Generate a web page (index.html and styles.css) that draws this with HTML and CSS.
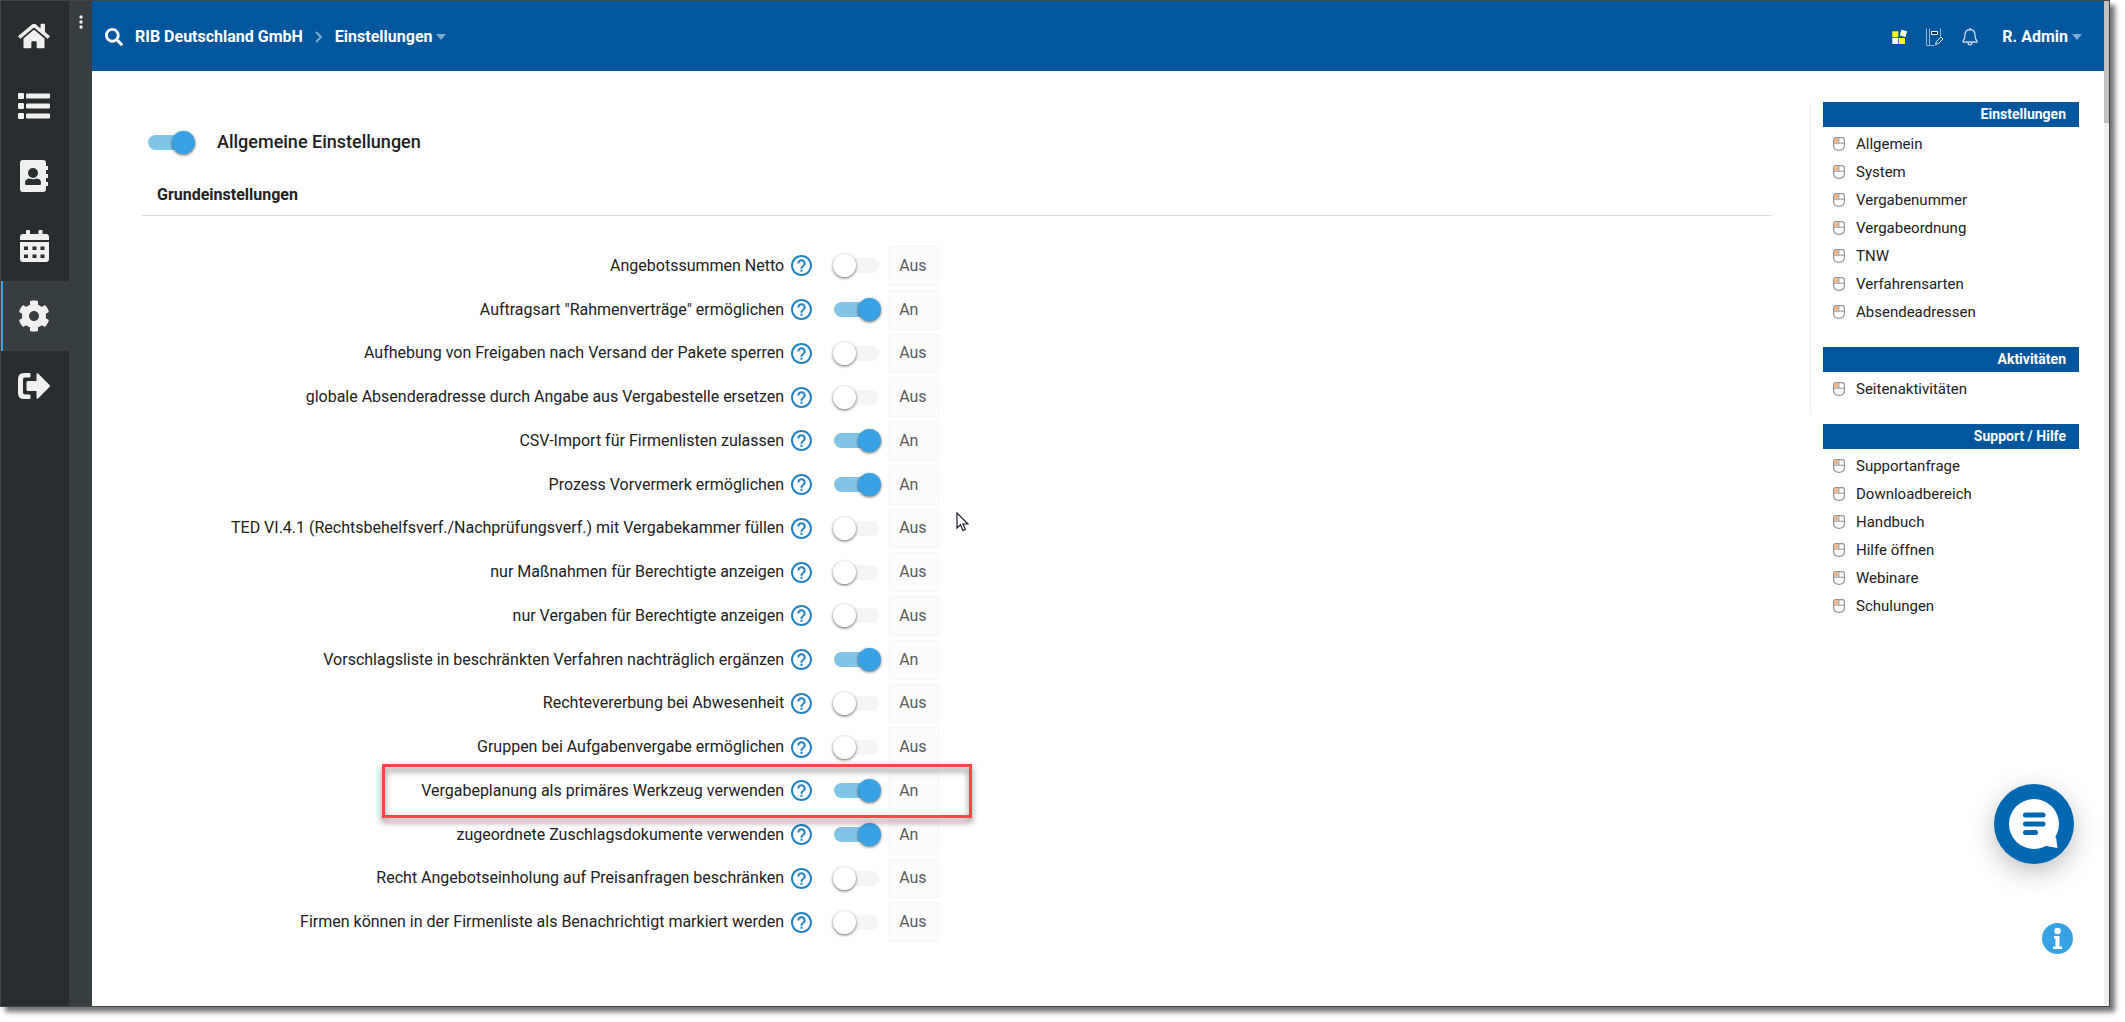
FILE: index.html
```html
<!DOCTYPE html>
<html lang="de">
<head>
<meta charset="utf-8">
<title>Einstellungen</title>
<link rel="stylesheet" href="styles.css">
</head>
<body>
<svg class="sprite" aria-hidden="true">
  <symbol id="help" viewBox="2 2 20 20"><path d="M11 18h2v-2h-2v2zm1-16C6.480 2 2 6.480 2 12s4.480 10 10 10 10-4.480 10-10S17.520 2 12 2zm0 18c-4.410 0-8-3.590-8-8s3.590-8 8-8 8 3.590 8 8-3.590 8-8 8zm0-14c-2.210 0-4 1.790-4 4h2c0-1.100.9-2 2-2s2 .9 2 2c0 2-3 1.750-3 5h2c0-2.250 3-2.500 3-5 0-2.210-1.790-4-4-4z"/></symbol>
  <symbol id="mouse" viewBox="0 0 12 14"><path fill="#fff" stroke="#939393" stroke-width="1.200" d="M3 .7h6Q11.400.7 11.400 3v5.500Q11.400 13.300 6 13.300T.6 8.500V3Q.6.7 3 .7z"/><path fill="#f6b27c" d="M1.200 2.800Q1.300 1.300 3 1.300h2.200v4.200h-4z"/><path stroke="#939393" fill="none" d="M.6 6.200h10.800M5.900 1v5"/></symbol>
</svg>
<div class="frame">
  <nav class="rail" aria-label="Hauptmenü">
    <a class="rail-link" href="#" aria-label="Start"><svg width="32" height="28" viewBox="0 0 576 512"><path d="M280.370 148.260L96 300.110V464a16 16 0 0 0 16 16l112.060-.29a16 16 0 0 0 15.920-16V368a16 16 0 0 1 16-16h64a16 16 0 0 1 16 16v95.640a16 16 0 0 0 16 16.050L464 480a16 16 0 0 0 16-16V300L295.670 148.260a12.190 12.190 0 0 0-15.300 0zM571.600 251.470L488 182.560V44.050a12 12 0 0 0-12-12h-56a12 12 0 0 0-12 12v72.610L318.470 43a48 48 0 0 0-61 0L4.340 251.470a12 12 0 0 0-1.600 16.900l25.500 31A12 12 0 0 0 45.150 301l235.220-193.740a12.190 12.190 0 0 1 15.300 0L530.900 301a12 12 0 0 0 16.900-1.600l25.500-31a12 12 0 0 0-1.700-16.930z"/></svg></a>
    <a class="rail-link" href="#" aria-label="Listen"><svg width="32" height="28" viewBox="0 0 32 28"><rect y="1" width="6" height="6" rx="1"/><rect x="8" y="1.500" width="24" height="5" rx="1"/><rect y="11" width="6" height="6" rx="1"/><rect x="8" y="11.500" width="24" height="5" rx="1"/><rect y="21" width="6" height="6" rx="1"/><rect x="8" y="21.500" width="24" height="5" rx="1"/></svg></a>
    <a class="rail-link" href="#" aria-label="Kontakte"><svg width="28" height="32" viewBox="0 0 28 32"><path fill-rule="evenodd" d="M3 0h20q3 0 3 3v3h2q.8 0 .8.800v2.400q0 .8-.8.800h-2v4h2q.8 0 .8.800v2.400q0 .8-.8.800h-2v4h2q.8 0 .8.800v2.400q0 .8-.8.800h-2v3q0 3-3 3H3q-3 0-3-3V3q0-3 3-3zM13 8a5 5 0 1 0 0 10a5 5 0 0 0 0-10zM9 18.500q-4 .7-4 4.500v.5q0 1.500 1.500 1.500h13q1.500 0 1.500-1.500V23q0-3.800-4-4.500q-4 1.500-8 0z"/></svg></a>
    <a class="rail-link" href="#" aria-label="Kalender"><svg width="29" height="32" viewBox="0 0 29 32"><path fill-rule="evenodd" d="M7 0h2q1 0 1 1v3h8.500V1q0-1 1-1h2q1 0 1 1v3h3.500q3 0 3 3v3H0V7q0-3 3-3h3V1q0-1 1-1zM0 12h29v17q0 3-3 3H3q-3 0-3-3zM4 16.500v3.500h4v-3.500zm8.500 0v3.500h4v-3.500zm8 0v3.500h4v-3.500zM4 24.500v3.500h4v-3.500zm8.500 0v3.500h4v-3.500zm8 0v3.500h4v-3.500z"/></svg></a>
    <a class="rail-link active" href="#" aria-label="Einstellungen"><svg width="32" height="32" viewBox="0 0 512 512"><path d="M487.400 315.700l-42.600-24.600c4.300-23.200 4.300-47 0-70.200l42.600-24.600c4.900-2.800 7.100-8.600 5.500-14-11.100-35.600-30-67.800-54.700-94.600-3.800-4.100-10-5.100-14.800-2.300L380.800 110c-17.900-15.400-38.500-27.300-60.800-35.100V25.800c0-5.600-3.900-10.500-9.400-11.700-36.700-8.200-74.300-7.800-109.200 0-5.500 1.200-9.400 6.100-9.400 11.700V75c-22.200 7.900-42.800 19.800-60.800 35.100L88.700 85.500c-4.900-2.800-11-1.900-14.800 2.300-24.700 26.700-43.600 58.900-54.700 94.600-1.700 5.400.6 11.200 5.500 14L67.300 221c-4.300 23.200-4.300 47 0 70.200l-42.600 24.600c-4.900 2.800-7.100 8.600-5.500 14 11.100 35.600 30 67.800 54.700 94.600 3.800 4.100 10 5.100 14.800 2.300l42.600-24.600c17.900 15.400 38.500 27.300 60.800 35.100v49.200c0 5.600 3.900 10.500 9.400 11.700 36.700 8.200 74.300 7.800 109.200 0 5.500-1.200 9.400-6.100 9.400-11.700v-49.200c22.200-7.900 42.800-19.800 60.800-35.100l42.600 24.600c4.900 2.800 11 1.900 14.800-2.300 24.700-26.700 43.600-58.900 54.700-94.600 1.500-5.500-.7-11.300-5.600-14.100zM256 336c-44.100 0-80-35.900-80-80s35.900-80 80-80 80 35.900 80 80-35.900 80-80 80z"/></svg></a>
    <a class="rail-link" href="#" aria-label="Abmelden"><svg width="32" height="26" viewBox="0 0 32 26"><path d="M11.500 0q1 0 1 1v2.500q0 1-1 1H7Q5 4.500 5 6.500v13q0 2 2 2h4.500q1 0 1 1V25q0 1-1 1H6q-6 0-6-6V6Q0 0 6 0zM18.500 1.500Q18.500-.5 20.300.7L31.500 12q.9 1 0 2L20.300 25.300q-1.800 1.200-1.800-.8V18H10q-1.500 0-1.500-1.500v-7Q8.500 8 10 8h8.500z"/></svg></a>
  </nav>
  <div class="subrail">
    <button class="dots" aria-label="Menü"><svg width="4" height="14" viewBox="0 0 4 14"><circle cx="2" cy="2" r="1.700"/><circle cx="2" cy="7" r="1.700"/><circle cx="2" cy="12" r="1.700"/></svg></button>
  </div>
  <div class="page">
    <header class="topbar">
      <button class="icon-button" aria-label="Suche"><svg width="18" height="18" viewBox="0 0 512 512" fill="#fff"><path d="M505 442.700L405.300 343c-4.500-4.500-10.600-7-17-7H372c27.600-35.300 44-79.700 44-128C416 93.100 322.900 0 208 0S0 93.100 0 208s93.100 208 208 208c48.300 0 92.700-16.400 128-44v16.300c0 6.400 2.500 12.500 7 17l99.700 99.700c9.400 9.400 24.600 9.400 33.900 0l28.300-28.300c9.400-9.400 9.400-24.600.1-34zM208 336c-70.700 0-128-57.200-128-128 0-70.700 57.200-128 128-128 70.700 0 128 57.200 128 128 0 70.700-57.200 128-128 128z"/></svg></button>
      <nav class="crumbs" aria-label="Pfad">
        <a href="#">RIB Deutschland GmbH</a>
        <svg width="8" height="12" viewBox="0 0 8 12" fill="none" stroke="#7fabce" stroke-width="2"><path d="M1 1l5 5-5 5"/></svg>
        <a class="with-caret" href="#">Einstellungen</a>
      </nav>
      <div class="tools">
        <button class="icon-button" aria-label="Module"><svg width="16" height="16" viewBox="0 0 16 16"><path fill="#ff0" d="M.3 2.300h6v6h-6zM7 9h6v6H7z"/><path fill="#fff" d="M.3 9h6v6h-6z"/><path fill="#fff" d="M9.400.8l5.600 1.500-1.500 5.600-5.600-1.500z"/></svg></button>
        <button class="icon-button" aria-label="Notizen"><svg width="18" height="18" viewBox="0 0 18 18" fill="none" stroke="#8fb5d6"><path d="M.5.5v17M3.500.5v17M.5 17.500h8M14.500.5v8"/><path stroke="#fff" fill="#00305a" d="M5.500 3.500h6v3h-6z"/><path stroke="#e6eef6" d="M9.500 16.500l1-3 4.500-4.500 2 2-4.500 4.500z"/></svg></button>
        <button class="icon-button" aria-label="Mitteilungen"><svg width="16" height="18" viewBox="0 0 16 18" fill="none" stroke="#c5d9ea" stroke-width="1.300"><path d="M8 1.500q5 .2 5 5.500 0 4 2 6v1H1v-1q2-2 2-6 0-5.300 5-5.500zM8 0v1.500M6 14.500q0 2.300 2 2.300t2-2.300"/></svg></button>
        <a class="with-caret user" href="#">R. Admin</a>
      </div>
    </header>
    <div class="content">
      <main class="settings">
        <label class="section-title"><input class="switch" type="checkbox" role="switch" checked><span>Allgemeine Einstellungen</span></label>
        <h2>Grundeinstellungen</h2>
        <div class="rows">
          <div class="row"><div class="name"><label for="s1">Angebotssummen Netto</label><button class="help" aria-label="Hilfe"><svg><use href="#help"/></svg></button></div><div class="state"><input class="switch" type="checkbox" role="switch" id="s1"><output for="s1">Aus</output></div></div>
          <div class="row"><div class="name"><label for="s2">Auftragsart "Rahmenverträge" ermöglichen</label><button class="help" aria-label="Hilfe"><svg><use href="#help"/></svg></button></div><div class="state"><input class="switch" type="checkbox" role="switch" id="s2" checked><output for="s2">An</output></div></div>
          <div class="row"><div class="name"><label for="s3">Aufhebung von Freigaben nach Versand der Pakete sperren</label><button class="help" aria-label="Hilfe"><svg><use href="#help"/></svg></button></div><div class="state"><input class="switch" type="checkbox" role="switch" id="s3"><output for="s3">Aus</output></div></div>
          <div class="row"><div class="name"><label for="s4">globale Absenderadresse durch Angabe aus Vergabestelle ersetzen</label><button class="help" aria-label="Hilfe"><svg><use href="#help"/></svg></button></div><div class="state"><input class="switch" type="checkbox" role="switch" id="s4"><output for="s4">Aus</output></div></div>
          <div class="row"><div class="name"><label for="s5">CSV-Import für Firmenlisten zulassen</label><button class="help" aria-label="Hilfe"><svg><use href="#help"/></svg></button></div><div class="state"><input class="switch" type="checkbox" role="switch" id="s5" checked><output for="s5">An</output></div></div>
          <div class="row"><div class="name"><label for="s6">Prozess Vorvermerk ermöglichen</label><button class="help" aria-label="Hilfe"><svg><use href="#help"/></svg></button></div><div class="state"><input class="switch" type="checkbox" role="switch" id="s6" checked><output for="s6">An</output></div></div>
          <div class="row"><div class="name"><label for="s7">TED VI.4.1 (Rechtsbehelfsverf./Nachprüfungsverf.) mit Vergabekammer füllen</label><button class="help" aria-label="Hilfe"><svg><use href="#help"/></svg></button></div><div class="state"><input class="switch" type="checkbox" role="switch" id="s7"><output for="s7">Aus</output></div></div>
          <div class="row"><div class="name"><label for="s8">nur Maßnahmen für Berechtigte anzeigen</label><button class="help" aria-label="Hilfe"><svg><use href="#help"/></svg></button></div><div class="state"><input class="switch" type="checkbox" role="switch" id="s8"><output for="s8">Aus</output></div></div>
          <div class="row"><div class="name"><label for="s9">nur Vergaben für Berechtigte anzeigen</label><button class="help" aria-label="Hilfe"><svg><use href="#help"/></svg></button></div><div class="state"><input class="switch" type="checkbox" role="switch" id="s9"><output for="s9">Aus</output></div></div>
          <div class="row"><div class="name"><label for="s10">Vorschlagsliste in beschränkten Verfahren nachträglich ergänzen</label><button class="help" aria-label="Hilfe"><svg><use href="#help"/></svg></button></div><div class="state"><input class="switch" type="checkbox" role="switch" id="s10" checked><output for="s10">An</output></div></div>
          <div class="row"><div class="name"><label for="s11">Rechtevererbung bei Abwesenheit</label><button class="help" aria-label="Hilfe"><svg><use href="#help"/></svg></button></div><div class="state"><input class="switch" type="checkbox" role="switch" id="s11"><output for="s11">Aus</output></div></div>
          <div class="row"><div class="name"><label for="s12">Gruppen bei Aufgabenvergabe ermöglichen</label><button class="help" aria-label="Hilfe"><svg><use href="#help"/></svg></button></div><div class="state"><input class="switch" type="checkbox" role="switch" id="s12"><output for="s12">Aus</output></div></div>
          <div class="row marked"><div class="name"><label for="s13">Vergabeplanung als primäres Werkzeug verwenden</label><button class="help" aria-label="Hilfe"><svg><use href="#help"/></svg></button></div><div class="state"><input class="switch" type="checkbox" role="switch" id="s13" checked><output for="s13">An</output></div></div>
          <div class="row"><div class="name"><label for="s14">zugeordnete Zuschlagsdokumente verwenden</label><button class="help" aria-label="Hilfe"><svg><use href="#help"/></svg></button></div><div class="state"><input class="switch" type="checkbox" role="switch" id="s14" checked><output for="s14">An</output></div></div>
          <div class="row"><div class="name"><label for="s15">Recht Angebotseinholung auf Preisanfragen beschränken</label><button class="help" aria-label="Hilfe"><svg><use href="#help"/></svg></button></div><div class="state"><input class="switch" type="checkbox" role="switch" id="s15"><output for="s15">Aus</output></div></div>
          <div class="row"><div class="name"><label for="s16">Firmen können in der Firmenliste als Benachrichtigt markiert werden</label><button class="help" aria-label="Hilfe"><svg><use href="#help"/></svg></button></div><div class="state"><input class="switch" type="checkbox" role="switch" id="s16"><output for="s16">Aus</output></div></div>
        </div>
      </main>
      <aside class="side">
        <div class="side-group page-links">
          <section>
            <h3>Einstellungen</h3>
            <ul>
              <li><a href="#"><svg><use href="#mouse"/></svg>Allgemein</a></li>
              <li><a href="#"><svg><use href="#mouse"/></svg>System</a></li>
              <li><a href="#"><svg><use href="#mouse"/></svg>Vergabenummer</a></li>
              <li><a href="#"><svg><use href="#mouse"/></svg>Vergabeordnung</a></li>
              <li><a href="#"><svg><use href="#mouse"/></svg>TNW</a></li>
              <li><a href="#"><svg><use href="#mouse"/></svg>Verfahrensarten</a></li>
              <li><a href="#"><svg><use href="#mouse"/></svg>Absendeadressen</a></li>
            </ul>
          </section>
          <section>
            <h3>Aktivitäten</h3>
            <ul>
              <li><a href="#"><svg><use href="#mouse"/></svg>Seitenaktivitäten</a></li>
            </ul>
          </section>
        </div>
        <div class="side-group">
          <section>
            <h3>Support / Hilfe</h3>
            <ul>
              <li><a href="#"><svg><use href="#mouse"/></svg>Supportanfrage</a></li>
              <li><a href="#"><svg><use href="#mouse"/></svg>Downloadbereich</a></li>
              <li><a href="#"><svg><use href="#mouse"/></svg>Handbuch</a></li>
              <li><a href="#"><svg><use href="#mouse"/></svg>Hilfe öffnen</a></li>
              <li><a href="#"><svg><use href="#mouse"/></svg>Webinare</a></li>
              <li><a href="#"><svg><use href="#mouse"/></svg>Schulungen</a></li>
            </ul>
          </section>
        </div>
      </aside>
    </div>
  </div>
  <div class="scrollbar"><div class="thumb"></div></div>
  <button class="chat" aria-label="Chat"><svg width="50" height="50" viewBox="0 0 50 50"><circle cx="25" cy="25" r="25" fill="#fff"/><path fill="#fff" d="M47 38l1.500 11-14-2.500z"/><path stroke="#0067b1" stroke-width="5" stroke-linecap="round" d="M16.500 16h17.500M16.500 25h17.500M16.500 33.500h10"/></svg></button>
  <button class="info" aria-label="Information"><svg width="31" height="31" viewBox="0 0 31 31"><circle cx="15.500" cy="15.500" r="15.500" fill="#38a3e4"/><circle cx="15.500" cy="8" r="3.200" fill="#fff"/><path fill="#fff" d="M12 13h5.500v10.500H20V26h-9v-2.500h2.500v-8H12z"/></svg></button>
  <svg class="cursor" width="14" height="20" viewBox="0 0 14 20" fill="#fff" stroke="#1b1b2b" stroke-width="1.200"><path d="M1 1v15l3.500-3.300 2.400 5.800 2.500-1-2.400-5.500h5z"/></svg>
</div>
</body>
</html>
```
FILE: styles.css
```css
*, *::before, *::after { box-sizing: border-box; }

body {
  margin: 0;
  padding: 0 15px 15px 0;
  background: #fff;
  color: #212121;
  font: 16px/24px Roboto, "Liberation Sans", sans-serif;
}

a { color: inherit; text-decoration: none; }
button { padding: 0; border: 0; background: none; cursor: pointer; }
svg { display: block; flex: none; }
.sprite { position: absolute; width: 0; height: 0; }

.frame {
  position: relative;
  display: flex;
  min-height: calc(100vh - 15px);
  border: 1px solid #444;
  box-shadow: 5px 5px 5px rgba(0, 0, 0, .55);
}

/* Icon rail */
.rail { width: 68px; background: #282d2f; }
.rail-link {
  display: flex;
  align-items: center;
  justify-content: center;
  height: 70px;
  padding-right: 2px;
  fill: #f0f0f0;
}
.rail-link.active { background: #373e41; box-shadow: inset 2px 0 #38a3e4; }
.subrail { width: 23px; padding-top: 14px; background: #373e41; }
.dots { display: block; margin: 0 auto; fill: #f0f0f0; }

.page { flex: 1; min-width: 0; background: #fff; }

/* Top bar */
.topbar {
  display: flex;
  align-items: center;
  height: 70px;
  padding: 2px 22px 0 13px;
  background: #00579d;
  color: #fff;
  font-weight: 700;
}
.crumbs { display: flex; align-items: center; gap: 12px; margin-left: 12px; }
.with-caret { display: flex; align-items: center; gap: 4px; }
.with-caret::after {
  content: "";
  border: 5px solid transparent;
  border-top: 6px solid #7fabce;
  border-bottom: 0;
}
.tools { display: flex; align-items: center; gap: 18px; margin-left: auto; }
.user { margin-left: 6px; }

.content { display: flex; align-items: flex-start; }

/* Settings */
.settings { flex: 1; min-width: 0; padding: 58px 38px 64px 50px; }
.section-title {
  display: flex;
  align-items: center;
  gap: 24px;
  padding-left: 6px;
  font-size: 18px;
  line-height: 26px;
  font-weight: 500;
}
h2 {
  margin: 28px 0 30px;
  padding: 0 15px 8px;
  border-bottom: 1px solid #ddd;
  font-size: 16px;
  font-weight: 700;
}
.rows { display: grid; grid-auto-rows: 1fr; gap: 4px; min-height: 696px; }
.row { position: relative; display: grid; grid-template-columns: 5fr 7fr; }
.name {
  display: flex;
  align-items: center;
  justify-content: flex-end;
  gap: 7px;
  padding-right: 9px;
  text-align: right;
}
.help svg { width: 21px; height: 21px; fill: #2181c2; }
.state { display: flex; align-items: center; gap: 10px; padding-left: 13px; }
output {
  align-self: stretch;
  display: flex;
  align-items: center;
  width: 50px;
  padding-left: 9px;
  border: 1px solid #f5f5f5;
  border-radius: 2px;
  background: #fcfcfc;
  color: #5a5a5a;
}
.marked { z-index: 1; }
.marked::after {
  content: "";
  position: absolute;
  top: -7px;
  bottom: -7px;
  left: 240px;
  width: 590px;
  border: 3px solid #f44;
  filter: drop-shadow(0 4px 3px rgba(0, 0, 0, .55));
  pointer-events: none;
}

.switch {
  appearance: none;
  position: relative;
  flex: none;
  width: 45px;
  height: 15px;
  margin: 0;
  border-radius: 8px;
  background: #f5f5f5;
}
.switch::before {
  content: "";
  position: absolute;
  top: -4px;
  left: -1px;
  width: 23px;
  height: 23px;
  border-radius: 50%;
  background: #fff;
  box-shadow: 0 1px 3px rgba(0, 0, 0, .6);
}
.switch:checked { background: #82c4e8; }
.switch:checked::before { left: 24px; background: #38a3e4; }

/* Side menu */
.side { padding: 31px 25px 0 0; font-size: 15px; }
.side-group { padding-left: 13px; }
.page-links { padding-bottom: 12px; border-left: 1px solid #eee; padding-left: 12px; }
.page-links + .side-group { margin-top: 9px; }
.side section + section { margin-top: 21px; }
h3 {
  width: 256px;
  margin: 0;
  padding-right: 13px;
  background: #00579d;
  color: #fff;
  font-size: 14px;
  line-height: 25px;
  font-weight: 700;
  text-align: right;
}
ul { margin: 0; padding: 3px 0 0 10px; list-style: none; }
li a { display: flex; align-items: center; gap: 11px; line-height: 28px; }
li svg { width: 12px; height: 14px; }

.scrollbar { width: 5px; background: #eee; }
.thumb { height: 122px; background: #c1c1c1; }

/* Floating elements */
.chat {
  position: absolute;
  right: 35px;
  bottom: 142px;
  display: flex;
  align-items: center;
  justify-content: center;
  width: 80px;
  height: 80px;
  border-radius: 50%;
  background: #0067b1;
  box-shadow: 0 8px 26px rgba(0, 0, 0, .25);
}
.info { position: absolute; right: 36px; bottom: 52px; }
.cursor { position: absolute; left: 955px; top: 511px; }
```
